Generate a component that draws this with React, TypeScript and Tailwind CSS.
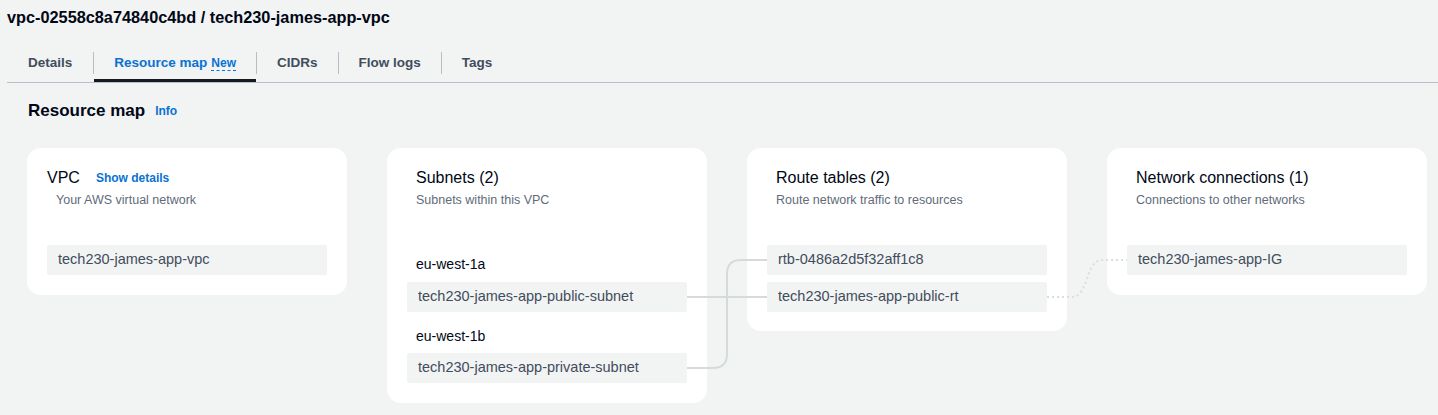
import React from "react";

const tabs = [
  { label: "Details" },
  { label: "Resource map", badge: "New", active: true },
  { label: "CIDRs" },
  { label: "Flow logs" },
  { label: "Tags" },
];

function Item({ children }: { children: React.ReactNode }) {
  return (
    <div className="flex h-[30px] items-center rounded-[2px] bg-[#f2f3f3] px-[11px] text-[14.5px] text-[#414d5c]">
      {children}
    </div>
  );
}

function CardHeader({ title, subtitle }: { title: string; subtitle: string }) {
  return (
    <div className="px-[9px]">
      <h3 className="text-[16px] leading-[22px] text-[#000716]">{title}</h3>
      <p className="mt-[3px] text-[12.5px] leading-[16px] text-[#5f6b7a]">{subtitle}</p>
    </div>
  );
}

export default function App() {
  return (
    <div
      className="min-h-[415px] w-[1438px] bg-[#f2f3f3] pt-[5px]"
      style={{ fontFamily: '"Liberation Sans", Arial, sans-serif' }}
    >
      <h1 className="px-[7px] text-[16.3px] font-bold leading-[24px] text-[#000716]">
        vpc-02558c8a74840c4bd / tech230-james-app-vpc
      </h1>

      <div className="ml-[7px] mt-[15px] flex items-center border-b border-[#b6bec9]">
        {tabs.map((tab, i) => (
          <React.Fragment key={tab.label}>
            {i > 0 && <span className="h-[22px] w-px bg-[#b6bec9]" />}
            <div
              className={`relative flex h-[38px] items-center pt-[1px] text-[13.5px] font-bold ${
                i === 0 ? "px-[21px]" : "px-[20px]"
              }`}
            >
              <span className={tab.active ? "text-[#0972d3]" : "text-[#414d5c]"}>{tab.label}</span>
              {tab.badge && (
                <span className="ml-[4px] border-b border-dashed border-[#0972d3] text-[12px] leading-[14px] text-[#0972d3]">
                  {tab.badge}
                </span>
              )}
              {tab.active && <span className="absolute inset-x-0 bottom-0 h-[3px] bg-[#16191f]" />}
            </div>
          </React.Fragment>
        ))}
      </div>

      <div className="mt-[16px] flex items-center gap-[10px] pl-[28px]">
        <h2 className="text-[17px] font-bold leading-[24px] text-[#000716]">Resource map</h2>
        <span className="text-[12px] font-bold text-[#0972d3]">Info</span>
      </div>

      <div className="relative mt-[25px] flex items-start gap-[40px] pl-[27px]">
        <section className="w-[320px] rounded-[14px] bg-white px-[20px] pb-[20px] pt-[19px]">
          <div className="flex items-center gap-[16px]">
            <h3 className="text-[16px] leading-[22px] text-[#000716]">VPC</h3>
            <span className="text-[12px] font-bold text-[#0972d3]">Show details</span>
          </div>
          <p className="ml-[9px] mt-[3px] text-[12.5px] leading-[16px] text-[#5f6b7a]">Your AWS virtual network</p>
          <div className="mt-[37px]">
            <Item>tech230-james-app-vpc</Item>
          </div>
        </section>

        <section className="w-[320px] rounded-[14px] bg-white px-[20px] pb-[20px] pt-[19px]">
          <CardHeader title="Subnets (2)" subtitle="Subnets within this VPC" />
          <div className="mt-[46px] px-[9px] text-[14px] leading-[20px] text-[#000716]">eu-west-1a</div>
          <div className="mt-[8px]">
            <Item>tech230-james-app-public-subnet</Item>
          </div>
          <div className="mt-[14px] px-[9px] text-[14px] leading-[20px] text-[#000716]">eu-west-1b</div>
          <div className="mt-[7px]">
            <Item>tech230-james-app-private-subnet</Item>
          </div>
        </section>

        <section className="w-[320px] rounded-[14px] bg-white px-[20px] pb-[19px] pt-[19px]">
          <CardHeader title="Route tables (2)" subtitle="Route network traffic to resources" />
          <div className="mt-[37px] flex flex-col gap-[7px]">
            <Item>rtb-0486a2d5f32aff1c8</Item>
            <Item>tech230-james-app-public-rt</Item>
          </div>
        </section>

        <section className="w-[320px] rounded-[14px] bg-white px-[20px] pb-[20px] pt-[19px]">
          <CardHeader title="Network connections (1)" subtitle="Connections to other networks" />
          <div className="mt-[37px]">
            <Item>tech230-james-app-IG</Item>
          </div>
        </section>

        <svg
          className="pointer-events-none absolute left-0 top-0"
          width="1438"
          height="260"
          fill="none"
        >
          <path d="M687 149 H767" stroke="#d5dbdb" strokeWidth="2" />
          <path
            d="M687 220 H713 Q727 220 727 206 V126 Q727 112 741 112 H767"
            stroke="#d5dbdb"
            strokeWidth="2"
          />
          <path
            d="M1047 149 H1072 C1089 149 1085 112 1102 112 H1127"
            stroke="#d9dede"
            strokeWidth="2"
            strokeDasharray="2 3"
          />
        </svg>
      </div>
    </div>
  );
}
